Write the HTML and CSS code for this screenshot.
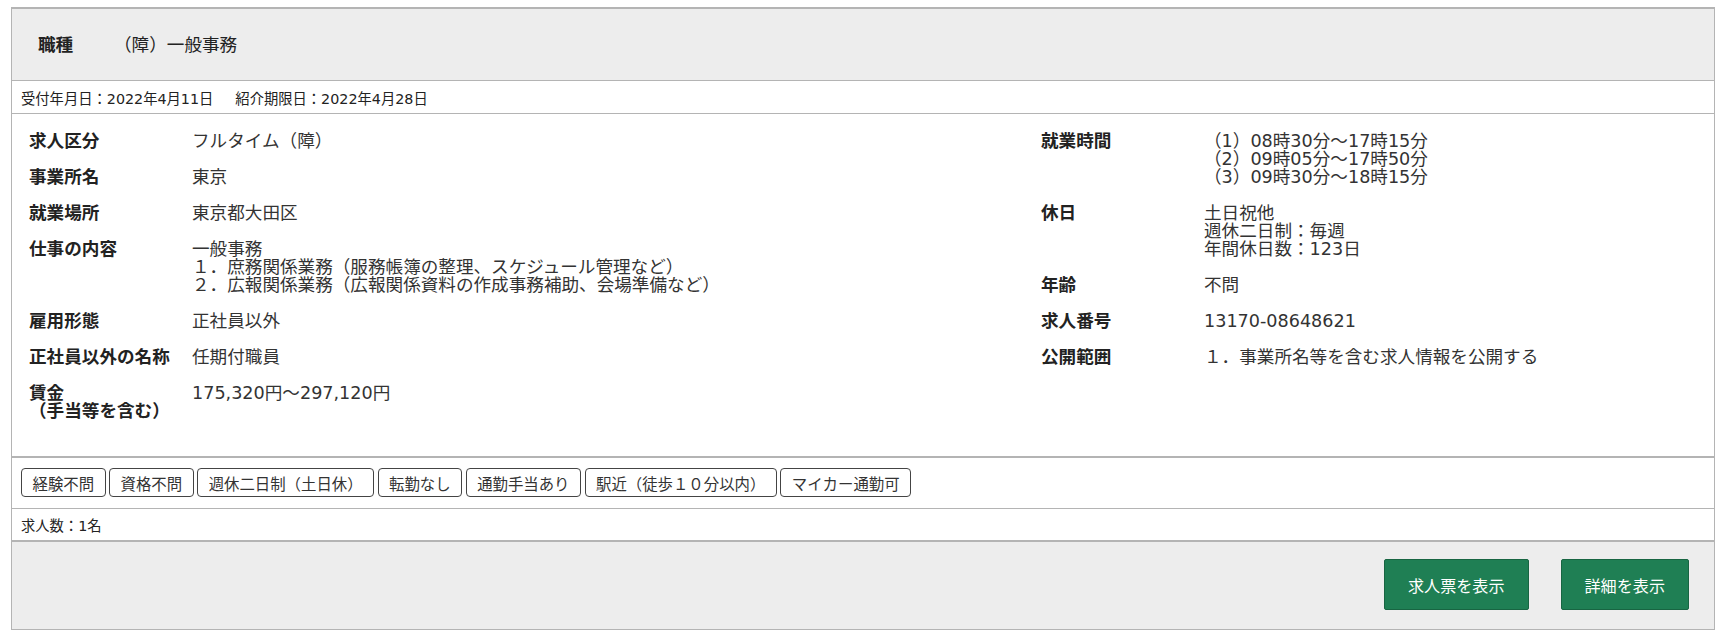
FILE: index.html
```html
<!DOCTYPE html>
<html lang="ja">
<head>
    <meta charset="UTF-8">
    <meta name="viewport" content="width=device-width, initial-scale=1.0">
    <title>求人情報</title>
    <link rel="stylesheet" href="styles.css">
</head>
<body>
    <div class="job-card">
        <div class="job-head">
            <span class="head-label">職種</span>
            <span class="head-value">（障）一般事務</span>
        </div>

        <div class="job-dates">
            <span>受付年月日：2022年4月11日</span>
            <span class="date-next">紹介期限日：2022年4月28日</span>
        </div>

        <div class="job-body">
            <dl class="info-col">
                <div class="info-row"><dt>求人区分</dt><dd>フルタイム（障）</dd></div>
                <div class="info-row"><dt>事業所名</dt><dd>東京</dd></div>
                <div class="info-row"><dt>就業場所</dt><dd>東京都大田区</dd></div>
                <div class="info-row">
                    <dt>仕事の内容</dt>
                    <dd>一般事務<br>１．庶務関係業務（服務帳簿の整理、スケジュール管理など）<br>２．広報関係業務（広報関係資料の作成事務補助、会場準備など）</dd>
                </div>
                <div class="info-row"><dt>雇用形態</dt><dd>正社員以外</dd></div>
                <div class="info-row"><dt>正社員以外の名称</dt><dd>任期付職員</dd></div>
                <div class="info-row"><dt>賃金<br>（手当等を含む）</dt><dd>175,320円〜297,120円</dd></div>
            </dl>

            <dl class="info-col">
                <div class="info-row">
                    <dt>就業時間</dt>
                    <dd>（1）08時30分〜17時15分<br>（2）09時05分〜17時50分<br>（3）09時30分〜18時15分</dd>
                </div>
                <div class="info-row">
                    <dt>休日</dt>
                    <dd>土日祝他<br>週休二日制：毎週<br>年間休日数：123日</dd>
                </div>
                <div class="info-row"><dt>年齢</dt><dd>不問</dd></div>
                <div class="info-row"><dt>求人番号</dt><dd>13170-08648621</dd></div>
                <div class="info-row"><dt>公開範囲</dt><dd>１．事業所名等を含む求人情報を公開する</dd></div>
            </dl>
        </div>

        <div class="job-tags">
            <span class="tag">経験不問</span>
            <span class="tag">資格不問</span>
            <span class="tag">週休二日制（土日休）</span>
            <span class="tag">転勤なし</span>
            <span class="tag">通勤手当あり</span>
            <span class="tag">駅近（徒歩１０分以内）</span>
            <span class="tag">マイカー通勤可</span>
        </div>

        <div class="job-count">求人数：1名</div>

        <div class="job-foot">
            <button class="btn">求人票を表示</button>
            <button class="btn">詳細を表示</button>
        </div>
    </div>
</body>
</html>
```

FILE: styles.css
```css
:root {
    --border-color: #b4b4b4;
    --text-color: #222;
    --panel-bg: #ededed;
    --green: #1f7f54;
}

* {
    margin: 0;
    padding: 0;
    box-sizing: border-box;
}

body {
    font-family: "DejaVu Sans", "Noto Sans CJK JP", sans-serif;
    color: var(--text-color);
    background: white;
}

.job-card {
    margin: 7px 12px 0 11px;
    border: 1px solid var(--border-color);
    border-top-width: 2px;
}

.job-head {
    display: flex;
    align-items: center;
    height: 72px;
    padding: 0 0 3px 26px;
    background: var(--panel-bg);
    font-size: 17.6px;
    border-bottom: 1px solid var(--border-color);
}

.head-label {
    width: 76px;
    font-weight: bold;
}

.job-dates {
    display: flex;
    align-items: center;
    height: 33px;
    padding-left: 9px;
    font-size: 14.3px;
    border-bottom: 1px solid var(--border-color);
}

.date-next {
    margin-left: 22px;
}

.job-body {
    display: grid;
    grid-template-columns: 1012px 1fr;
    padding: 18px 17px 18px;
    border-bottom: 2px solid var(--border-color);
    font-size: 17.6px;
    line-height: 18px;
}

.info-row {
    display: flex;
    margin-bottom: 18px;
}

.info-row dt {
    width: 163px;
    flex-shrink: 0;
    font-weight: bold;
}

.info-row dd {
    color: #333;
}

.job-tags {
    display: flex;
    align-items: flex-start;
    gap: 3.5px;
    height: 51px;
    padding: 10px 0 0 9px;
    border-bottom: 1px solid var(--border-color);
}

.tag {
    display: inline-flex;
    align-items: center;
    height: 29px;
    padding: 0 10.5px;
    border: 1px solid #444;
    border-radius: 4px;
    font-size: 15.4px;
    color: #333;
}

.job-count {
    display: flex;
    align-items: center;
    height: 33px;
    padding-left: 9px;
    font-size: 14.3px;
    border-bottom: 2px solid var(--border-color);
}

.job-foot {
    display: flex;
    justify-content: flex-end;
    gap: 32px;
    height: 87px;
    padding: 17px 25px 0 0;
    background: var(--panel-bg);
}

.btn {
    height: 51px;
    padding: 0 23px;
    background: var(--green);
    border: 1px solid #186542;
    border-radius: 2px;
    color: white;
    font-family: inherit;
    font-size: 16.1px;
}
```
